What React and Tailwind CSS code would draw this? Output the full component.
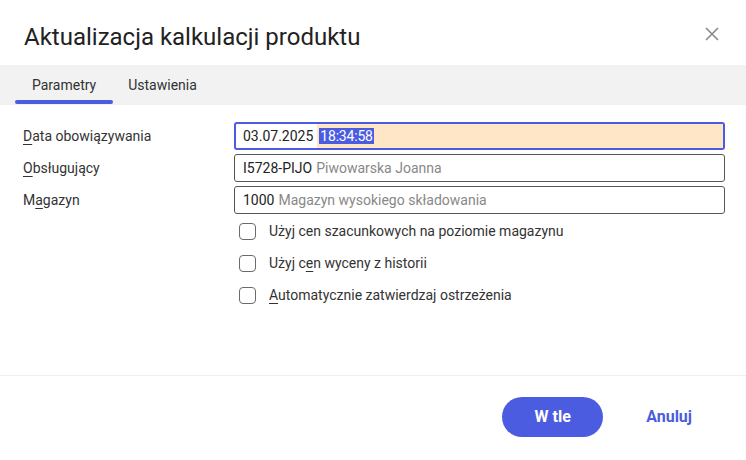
import React from "react";

const font = { fontFamily: "Roboto, 'Noto Sans', sans-serif" };

function U({ children }) {
  return <span className="underline underline-offset-[3px] decoration-[1px]">{children}</span>;
}

function Checkbox({ children }) {
  return (
    <div className="flex h-8 items-center">
      <div className="ml-[239px] h-[17px] w-[17px] rounded-[4px] border border-[#6b6b6b] bg-white" />
      <span className="ml-[13px] text-[14px] text-[#333]">{children}</span>
    </div>
  );
}

export default function App() {
  return (
    <div className="flex h-[460px] w-[746px] flex-col bg-white text-[#222]" style={font}>
      <div className="flex h-[65px] items-center justify-between pl-6 pr-[26px]">
        <h1 className="pt-[8px] text-[24px] font-normal text-[#222]">Aktualizacja kalkulacji produktu</h1>
        <svg width="16" height="16" viewBox="0 0 16 16" className="mt-[2px]">
          <path d="M2 2 L14 14 M14 2 L2 14" stroke="#8a8a8a" strokeWidth="1.6" fill="none" />
        </svg>
      </div>

      <div className="flex h-[40px] bg-[#f2f2f2] pl-[15px]">
        <div className="relative flex items-center px-[17px] text-[14px] text-[#333]">
          Parametry
          <div className="absolute bottom-[1px] left-0 right-0 h-[4px] rounded-full bg-[#4b5ce0]" />
        </div>
        <div className="flex items-center pl-[15px] pr-[17px] text-[14px] text-[#333]">Ustawienia</div>
      </div>

      <div className="flex h-[270px] flex-col pt-[17px]">
        <div className="flex flex-col gap-1 pr-[21px]">
          <div className="flex h-7 items-center">
            <div className="w-[234px] pl-[23px] text-[14px] text-[#333]">
              <U>D</U>ata obowiązywania
            </div>
            <div className="flex h-7 flex-1 overflow-hidden rounded-[3px] border-2 border-[#4b5ce0] bg-white">
              <div className="flex items-center pl-[7px] pr-[4px] text-[14px] text-[#222]">03.07.2025</div>
              <div className="flex flex-1 items-center bg-[#fee6c6] pl-[2px]">
                <span className="bg-[#4b5ce0] px-[1px] text-[14px] leading-4 tracking-[-0.2px] text-white">18:34:58</span>
              </div>
            </div>
          </div>
          <div className="flex h-7 items-center">
            <div className="w-[234px] pl-[23px] text-[14px] text-[#333]">
              <U>O</U>bsługujący
            </div>
            <div className="flex h-7 flex-1 items-center rounded-[3px] border border-[#555] pl-2 text-[14px]">
              <span className="text-[#222]">I5728-PIJO</span>
              <span className="ml-1 text-[#888]">Piwowarska Joanna</span>
            </div>
          </div>
          <div className="flex h-7 items-center">
            <div className="w-[234px] pl-[23px] text-[14px] text-[#333]">
              M<U>a</U>gazyn
            </div>
            <div className="flex h-7 flex-1 items-center rounded-[3px] border border-[#555] pl-2 text-[14px]">
              <span className="text-[#222]">1000</span>
              <span className="ml-1 text-[#888]">Magazyn wysokiego składowania</span>
            </div>
          </div>
        </div>
        <div className="mt-[1px] flex flex-col">
          <Checkbox>Użyj cen szacunkowych na poziomie magazynu</Checkbox>
          <Checkbox>
            Użyj c<U>e</U>n wyceny z historii
          </Checkbox>
          <Checkbox>
            <U>A</U>utomatycznie zatwierdzaj ostrzeżenia
          </Checkbox>
        </div>
      </div>

      <div className="h-px bg-[#efefef]" />

      <div className="flex h-[84px] items-center justify-end pr-[38px] pb-[2px]">
        <button className="h-10 w-[101px] rounded-full bg-[#4b5ce0] text-[16px] font-bold text-white">W tle</button>
        <button className="ml-[27px] px-4 text-[16px] font-bold text-[#4b5ce0]">Anuluj</button>
      </div>
    </div>
  );
}
